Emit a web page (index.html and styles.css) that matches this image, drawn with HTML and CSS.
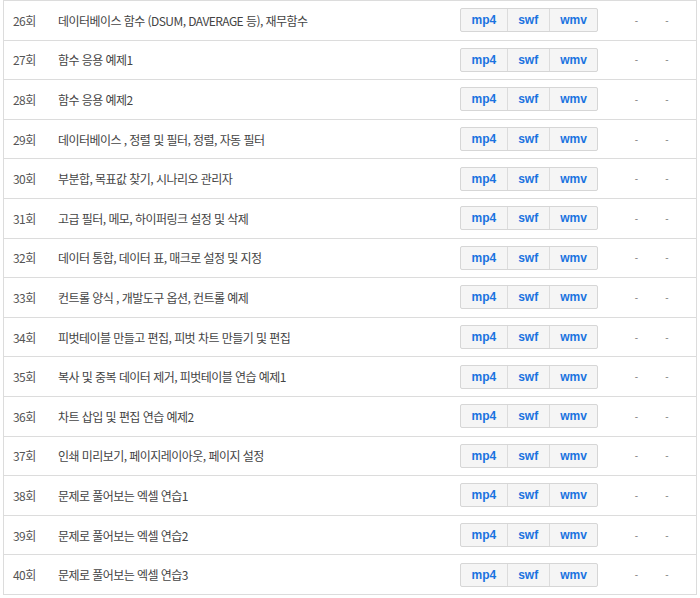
FILE: index.html
```html
<!DOCTYPE html>
<html lang="ko">
<head>
<meta charset="utf-8">
<link rel="stylesheet" href="styles.css">
</head>
<body>
<div class="wrap">
<table class="list">
<tbody>
<tr><td class="no">26회</td><td class="title">데이터베이스 함수 (DSUM, DAVERAGE 등), 재무함수</td><td class="btns"><span class="grp"><a>mp4</a><a>swf</a><a>wmv</a></span></td><td class="d">-</td><td class="d last">-</td></tr>
<tr><td class="no">27회</td><td class="title">함수 응용 예제1</td><td class="btns"><span class="grp"><a>mp4</a><a>swf</a><a>wmv</a></span></td><td class="d">-</td><td class="d last">-</td></tr>
<tr><td class="no">28회</td><td class="title">함수 응용 예제2</td><td class="btns"><span class="grp"><a>mp4</a><a>swf</a><a>wmv</a></span></td><td class="d">-</td><td class="d last">-</td></tr>
<tr><td class="no">29회</td><td class="title">데이터베이스 , 정렬 및 필터, 정렬, 자동 필터</td><td class="btns"><span class="grp"><a>mp4</a><a>swf</a><a>wmv</a></span></td><td class="d">-</td><td class="d last">-</td></tr>
<tr><td class="no">30회</td><td class="title">부분합, 목표값 찾기, 시나리오 관리자</td><td class="btns"><span class="grp"><a>mp4</a><a>swf</a><a>wmv</a></span></td><td class="d">-</td><td class="d last">-</td></tr>
<tr><td class="no">31회</td><td class="title">고급 필터, 메모, 하이퍼링크 설정 및 삭제</td><td class="btns"><span class="grp"><a>mp4</a><a>swf</a><a>wmv</a></span></td><td class="d">-</td><td class="d last">-</td></tr>
<tr><td class="no">32회</td><td class="title">데이터 통합, 데이터 표, 매크로 설정 및 지정</td><td class="btns"><span class="grp"><a>mp4</a><a>swf</a><a>wmv</a></span></td><td class="d">-</td><td class="d last">-</td></tr>
<tr><td class="no">33회</td><td class="title">컨트롤 양식 , 개발도구 옵션, 컨트롤 예제</td><td class="btns"><span class="grp"><a>mp4</a><a>swf</a><a>wmv</a></span></td><td class="d">-</td><td class="d last">-</td></tr>
<tr><td class="no">34회</td><td class="title">피벗테이블 만들고 편집, 피벗 차트 만들기 및 편집</td><td class="btns"><span class="grp"><a>mp4</a><a>swf</a><a>wmv</a></span></td><td class="d">-</td><td class="d last">-</td></tr>
<tr><td class="no">35회</td><td class="title">복사 및 중복 데이터 제거, 피벗테이블 연습 예제1</td><td class="btns"><span class="grp"><a>mp4</a><a>swf</a><a>wmv</a></span></td><td class="d">-</td><td class="d last">-</td></tr>
<tr><td class="no">36회</td><td class="title">차트 삽입 및 편집 연습 예제2</td><td class="btns"><span class="grp"><a>mp4</a><a>swf</a><a>wmv</a></span></td><td class="d">-</td><td class="d last">-</td></tr>
<tr><td class="no">37회</td><td class="title">인쇄 미리보기, 페이지레이아웃, 페이지 설정</td><td class="btns"><span class="grp"><a>mp4</a><a>swf</a><a>wmv</a></span></td><td class="d">-</td><td class="d last">-</td></tr>
<tr><td class="no">38회</td><td class="title">문제로 풀어보는 엑셀 연습1</td><td class="btns"><span class="grp"><a>mp4</a><a>swf</a><a>wmv</a></span></td><td class="d">-</td><td class="d last">-</td></tr>
<tr><td class="no">39회</td><td class="title">문제로 풀어보는 엑셀 연습2</td><td class="btns"><span class="grp"><a>mp4</a><a>swf</a><a>wmv</a></span></td><td class="d">-</td><td class="d last">-</td></tr>
<tr><td class="no">40회</td><td class="title">문제로 풀어보는 엑셀 연습3</td><td class="btns"><span class="grp"><a>mp4</a><a>swf</a><a>wmv</a></span></td><td class="d">-</td><td class="d last">-</td></tr>
</tbody>
</table>
</div>
</body>
</html>
```
FILE: styles.css
```css
html, body {
  margin: 0;
  padding: 0;
  background: #fff;
}
.wrap {
  padding: 0 3px;
}
.list {
  width: 694px;
  border-collapse: collapse;
  table-layout: fixed;
  border-left: 1px solid #dcdcdc;
  border-right: 1px solid #dcdcdc;
  font-family: "Noto Sans CJK KR", "Noto Sans", sans-serif;
  font-size: 12px;
  letter-spacing: -0.55px;
  color: #444;
}
.list td {
  border-top: 1px solid #dcdcdc;
  border-bottom: 1px solid #dcdcdc;
  height: 38.6px;
  padding: 0;
  vertical-align: middle;
  white-space: nowrap;
}
.list td.no {
  width: 45px;
  padding-left: 9px;
  color: #555;
}
.title {
  width: auto;
  color: #444;
}
.list td.btns {
  width: 161px;
  padding-left: 10px;
}
.grp {
  display: inline-flex;
  border: 1px solid #d6d6d6;
  border-radius: 2px;
  background: #f5f5f5;
  letter-spacing: 0;
}
.grp a {
  display: block;
  height: 22px;
  line-height: 22px;
  padding: 0 10.5px;
  font-family: "Liberation Sans", Arial, sans-serif;
  font-weight: bold;
  font-size: 12px;
  color: #1a73e0;
  border-left: 1px solid #dcdcdc;
}
.grp a:first-child {
  border-left: none;
}
.list td.d {
  width: 31px;
  text-align: center;
  color: #888;
  letter-spacing: 0;
  font-family: "Liberation Sans", Arial, sans-serif;
  font-size: 10px;
}
.list td.d.last {
  width: 30px;
  padding-right: 14px;
}
```
